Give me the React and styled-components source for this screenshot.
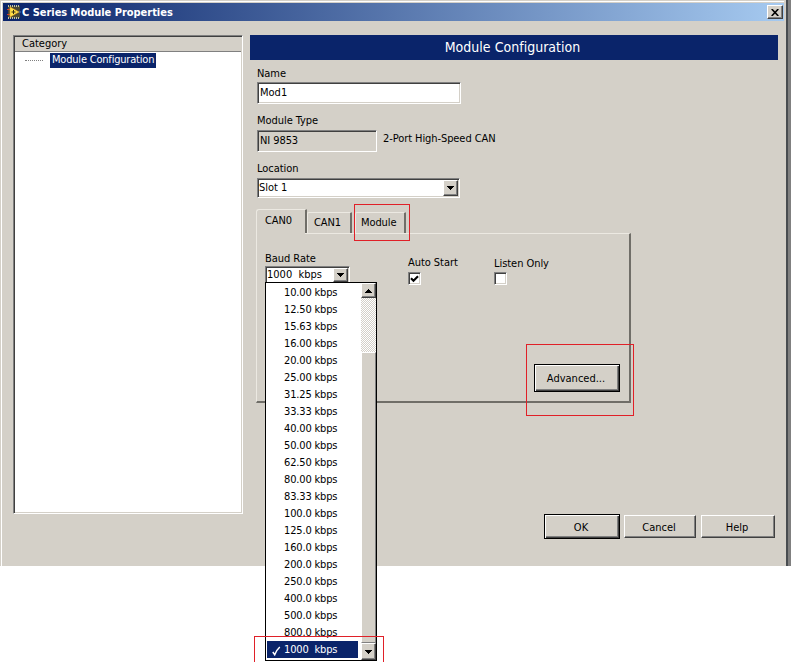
import React from "react";
import styled, { createGlobalStyle, css } from "styled-components";

const FACE = "#d4d0c8";
const NAVY = "#0a246a";
const DARK = "#404040";
const SHADOW = "#808080";

const GlobalStyle = createGlobalStyle`
  * { box-sizing: border-box; }
  body {
    margin: 0;
    background: #fff;
    color: #000;
    font: 11px/14px "DejaVu Sans Condensed", "DejaVu Sans", sans-serif;
    overflow: hidden;
  }
`;

const Screen = styled.div`
  position: relative;
  width: 791px;
  height: 662px;
  overflow: hidden;
`;

const Backdrop = styled.div`
  width: 791px;
  height: 566px;
  padding-right: 3px;
  background: ${SHADOW};
`;

const Window = styled.div`
  height: 566px;
  padding: 1px 2px 0 1px;
  background: ${FACE};
  border-right: 2px solid #484c50;
`;

const Frame = styled.div`
  height: 565px;
  border-top: 1px solid #fff;
  border-left: 1px solid #fff;
  padding: 1px 0 0;
`;

const TitleBar = styled.div`
  display: flex;
  align-items: center;
  height: 18px;
  margin-left: 1px;
  padding: 0 1px 0 4px;
  background: linear-gradient(90deg, ${NAVY}, #a6caf0);
  color: #fff;
  font-weight: bold;
`;

const Title = styled.span`
  flex: 1;
  margin-left: 1px;
  letter-spacing: -0.03px;
  line-height: 18px;
  padding-top: 1px;
  white-space: nowrap;
`;

const CloseButton = styled.button`
  display: flex;
  align-items: center;
  justify-content: center;
  width: 16px;
  height: 14px;
  padding: 0;
  background: ${FACE};
  border: 1px solid;
  border-color: #fff ${DARK} ${DARK} #fff;
  box-shadow: inset -1px -1px ${SHADOW};
`;

const Body = styled.div`
  display: flex;
  padding: 14px 0 0 11px;
`;

const Tree = styled.div`
  width: 230px;
  height: 479px;
  background: #fff;
  border: 1px solid;
  border-color: ${SHADOW} #fff #fff ${SHADOW};
  box-shadow: inset 1px 1px ${DARK}, inset -1px -1px ${FACE};
  padding: 1px;
`;

const TreeHeader = styled.div`
  height: 15px;
  padding-left: 7px;
  line-height: 14px;
  background: ${FACE};
  border-bottom: 1px solid ${SHADOW};
`;

const TreeItem = styled.div`
  display: flex;
  align-items: center;
  height: 16px;
  padding-left: 10px;
`;

const Branch = styled.span`
  width: 18px;
  margin-right: 7px;
  border-top: 1px dotted ${SHADOW};
`;

const TreeLabel = styled.span`
  width: 106px;
  height: 15px;
  padding-left: 2px;
  line-height: 14px;
  white-space: nowrap;
  background: ${NAVY};
  color: #fff;
  letter-spacing: -0.2px;
`;

const Main = styled.div`
  width: 528px;
  margin-left: 7px;
`;

const Banner = styled.h1`
  height: 25px;
  margin: 0;
  background: ${NAVY};
  color: #fff;
  font-size: 14px;
  font-weight: normal;
  line-height: 24px;
  letter-spacing: 0.02px;
  text-align: center;
  padding-right: 3px;
`;

const Form = styled.div`
  padding: 7px 0 0 7px;
`;

const Field = styled.div`
  height: ${(p) => p.$height}px;
`;

const Label = styled.div`
  height: ${(p) => p.$height || 15}px;
  line-height: 14px;
  white-space: nowrap;
  letter-spacing: -0.05px;
`;

const sunken = css`
  border: 1px solid;
  border-color: ${SHADOW} #fff #fff ${SHADOW};
  box-shadow: inset 1px 1px ${DARK}, inset -1px -1px ${FACE};
`;

const TextBox = styled.div`
  ${sunken}
  width: ${(p) => p.$width}px;
  height: 22px;
  padding-left: 2px;
  line-height: 19px;
  background: ${(p) => (p.$readOnly ? FACE : "#fff")};
`;

const TypeRow = styled.div`
  display: flex;
  gap: 6px;
  line-height: 17px;
  letter-spacing: -0.08px;
`;

const Combo = styled.div`
  ${sunken}
  display: flex;
  flex: none;
  justify-content: space-between;
  width: ${(p) => p.$width}px;
  height: ${(p) => p.$height}px;
  padding: 1px 1px 1px ${(p) => p.$indent}px;
  line-height: ${(p) => p.$height - 5}px;
  background: #fff;
  white-space: pre;
`;

const ArrowButton = styled.span`
  display: flex;
  flex: none;
  align-items: center;
  justify-content: center;
  width: 15px;
  height: ${(p) => p.$height || "auto"};
  background: ${FACE};
  border: 1px solid;
  border-color: #fff ${DARK} ${DARK} #fff;
  box-shadow: inset -1px -1px ${SHADOW};
`;

const Tabs = styled.div`
  display: flex;
  align-items: flex-end;
  height: 24px;
  margin: 10px 0 0 -1px;
`;

const Tab = styled.div`
  width: ${(p) => p.$width}px;
  height: ${(p) => (p.$active ? 24 : 21)}px;
  margin-right: ${(p) => p.$gap || 0}px;
  padding-left: ${(p) => p.$indent}px;
  line-height: ${(p) => (p.$active ? 21 : 19)}px;
  letter-spacing: -0.1px;
  border-top: 1px solid #ece9e2;
  border-left: 1px solid #ece9e2;
  border-right: 2px solid #706e68;
  border-radius: ${(p) => (p.$active ? 3 : 2)}px 1px 0 0;
`;

const TabPanel = styled.div`
  display: flex;
  width: 375px;
  height: 170px;
  margin-left: -1px;
  border: 1px solid #ece9e2;
  border-right: 2px solid #706e68;
  border-bottom: 2px solid #706e68;
`;

/* the open tab hides the panel's top edge beneath itself */
const TabGap = styled.div`
  flex: none;
  width: 48px;
  height: 1px;
  margin-top: -1px;
  margin-right: -48px;
  background: ${FACE};
`;

const BaudField = styled.div`
  flex: none;
  width: 151px;
  padding: 18px 0 0 8px;
`;

const CheckField = styled.div`
  flex: none;
  width: ${(p) => p.$width}px;
  padding-top: ${(p) => p.$top}px;
`;

const CheckBox = styled.div`
  ${sunken}
  display: flex;
  align-items: center;
  justify-content: center;
  width: 13px;
  height: 13px;
  background: #fff;
`;

const AdvancedSlot = styled.div`
  display: flex;
  flex: 1;
  align-items: flex-end;
  justify-content: flex-end;
  margin-left: -60px;
  padding: 0 9px 9px 0;
`;

const Button = styled.button`
  width: ${(p) => p.$width}px;
  height: ${(p) => p.$height}px;
  padding: 2px 2px 0 0;
  font: inherit;
  color: #000;
  background: ${FACE};
  border: 1px solid;
  border-color: #fff ${DARK} ${DARK} #fff;
  box-shadow: inset -1px -1px ${SHADOW};
  ${(p) =>
    p.$primary &&
    css`
      border-color: #000;
      box-shadow: inset 1px 1px #fff, inset -1px -1px ${DARK}, inset -2px -2px ${SHADOW};
    `}
`;

const Footer = styled.div`
  display: flex;
  align-items: center;
  justify-content: flex-end;
  gap: 5px;
  margin-top: 111px;
  padding-right: 3px;

  ${Button}:first-child {
    margin-right: -1px;
  }
`;

const ListBox = styled.div`
  position: absolute;
  left: 265px;
  top: 282px;
  display: flex;
  width: 112px;
  height: 379px;
  background: #fff;
  border: 1px solid #000;
`;

const Options = styled.div`
  flex: 1;
  padding: 1px 3px 0 1px;
`;

const Option = styled.div`
  display: flex;
  height: 17px;
  padding-left: 1px;
  line-height: 17px;
  letter-spacing: -0.16px;
  white-space: pre;
  background: ${(p) => (p.$selected ? NAVY : "transparent")};
  color: ${(p) => (p.$selected ? "#fff" : "#000")};
`;

const Tick = styled.span`
  display: flex;
  align-items: center;
  width: 16px;
  padding: 2px 0 0 4px;
`;

const ScrollBar = styled.div`
  display: flex;
  flex-direction: column;
  width: 15px;
  background: repeating-conic-gradient(${FACE} 0 25%, #fff 0 50%) 0 0 / 2px 2px;
`;

const Thumb = styled.div`
  flex: 1;
  margin-top: 54px;
  background: ${FACE};
  border: 1px solid;
  border-color: #fff ${SHADOW} ${SHADOW} #fff;
`;

const Highlight = styled.div`
  position: absolute;
  left: ${(p) => p.$x}px;
  top: ${(p) => p.$y}px;
  width: ${(p) => p.$w}px;
  height: ${(p) => p.$h}px;
  border: 1px solid #e02028;
  pointer-events: none;
`;

const rates = [
  "10.00", "12.50", "15.63", "16.00", "20.00", "25.00", "31.25", "33.33",
  "40.00", "50.00", "62.50", "80.00", "83.33", "100.0", "125.0", "160.0",
  "200.0", "250.0", "400.0", "500.0", "800.0", "1000 ",
];

const Arrow = ({ up }) => (
  <svg width="7" height="4" shapeRendering="crispEdges">
    <path d={up ? "M3 0h1v1h1v1h1v1h1v1H0V3h1V2h1V1h1z" : "M0 0h7v1H6v1H5v1H4v1H3V3H2V2H1V1H0z"} />
  </svg>
);

const Check = () => (
  <svg width="9" height="8" viewBox="0 0 9 8">
    <path d="M1 3.2 3.5 5.7 8 1.2" fill="none" stroke="#000" strokeWidth="2.1" />
  </svg>
);

const SelectedMark = () => (
  <svg width="9" height="10" viewBox="0 0 9 10">
    <path d="M.8 6 2.7 8.7Q4.5 4 7.8 1" fill="none" stroke="#fff" strokeWidth="1.5" />
  </svg>
);

const AppIcon = () => (
  <svg width="14" height="14" viewBox="0 0 14 14">
    <path d="M1 1h12v12H1z" fill="#4b4a35" />
    <path d="M1 1h12M1 13h12" stroke="#c4c4a0" strokeWidth="2" strokeDasharray="1 1" />
    <path d="M0 4.5h3M0 9.5h3" stroke="#d0402c" />
    <path d="M11 7h3" stroke="#467bc4" />
    <path d="M3 2v10l9-5z" fill="#ffe34a" stroke="#e8a020" strokeWidth=".6" />
    <path d="M4.5 7h4M6.5 5v4" stroke="#332c12" />
  </svg>
);

const App = () => {
  return (
    <Screen>
      <GlobalStyle />
      <Backdrop>
        <Window>
          <Frame>
            <TitleBar>
              <AppIcon />
              <Title>C Series Module Properties</Title>
              <CloseButton aria-label="Close">
                <svg width="8" height="7" viewBox="0 0 8 7">
                  <path d="M.7 0 7.3 7M7.3 0 .7 7" stroke="#000" strokeWidth="1.6" />
                </svg>
              </CloseButton>
            </TitleBar>
            <Body>
              <Tree>
                <TreeHeader>Category</TreeHeader>
                <TreeItem>
                  <Branch />
                  <TreeLabel>Module Configuration</TreeLabel>
                </TreeItem>
              </Tree>
              <Main>
                <Banner>Module Configuration</Banner>
                <Form>
                  <Field $height={47}>
                    <Label>Name</Label>
                    <TextBox $width={204}>Mod1</TextBox>
                  </Field>
                  <Field $height={48}>
                    <Label $height={16}>Module Type</Label>
                    <TypeRow>
                      <TextBox $width={120} $readOnly>NI 9853</TextBox>
                      <span>2-Port High-Speed CAN</span>
                    </TypeRow>
                  </Field>
                  <Field $height={37}>
                    <Label $height={16}>Location</Label>
                    <Combo $width={203} $height={20} $indent={1}>
                      Slot 1
                      <ArrowButton><Arrow /></ArrowButton>
                    </Combo>
                  </Field>
                  <Tabs>
                    <Tab $width={51} $indent={8} $active>CAN0</Tab>
                    <Tab $width={45} $indent={6} $gap={3}>CAN1</Tab>
                    <Tab $width={51} $indent={5}>Module</Tab>
                  </Tabs>
                  <TabPanel>
                    <TabGap />
                    <BaudField>
                      <Label $height={14}>Baud Rate</Label>
                      <Combo $width={85} $height={18} $indent={1}>
                        {"1000  kbps"}
                        <ArrowButton><Arrow /></ArrowButton>
                      </Combo>
                    </BaudField>
                    <CheckField $width={86} $top={22}>
                      <Label $height={16}>Auto Start</Label>
                      <CheckBox><Check /></CheckBox>
                    </CheckField>
                    <CheckField $width={60} $top={23}>
                      <Label>Listen Only</Label>
                      <CheckBox />
                    </CheckField>
                    <AdvancedSlot>
                      <Button $width={86} $height={28} $primary>Advanced...</Button>
                    </AdvancedSlot>
                  </TabPanel>
                </Form>
                <Footer>
                  <Button $width={76} $height={25} $primary>OK</Button>
                  <Button $width={72} $height={23}>Cancel</Button>
                  <Button $width={74} $height={23}>Help</Button>
                </Footer>
              </Main>
            </Body>
          </Frame>
        </Window>
      </Backdrop>
      <ListBox>
        <Options>
          {rates.map((rate) => {
            const selected = rate === "1000 ";
            return (
              <Option key={rate} $selected={selected}>
                <Tick>{selected && <SelectedMark />}</Tick>
                {rate} kbps
              </Option>
            );
          })}
        </Options>
        <ScrollBar>
          <ArrowButton $height="15px"><Arrow up /></ArrowButton>
          <Thumb />
          <ArrowButton $height="17px"><Arrow /></ArrowButton>
        </ScrollBar>
      </ListBox>
      <Highlight $x={354} $y={204} $w={56} $h={37} />
      <Highlight $x={526} $y={344} $w={108} $h={72} />
      <Highlight $x={254} $y={636} $w={130} $h={40} />
    </Screen>
  );
};

export default App;
